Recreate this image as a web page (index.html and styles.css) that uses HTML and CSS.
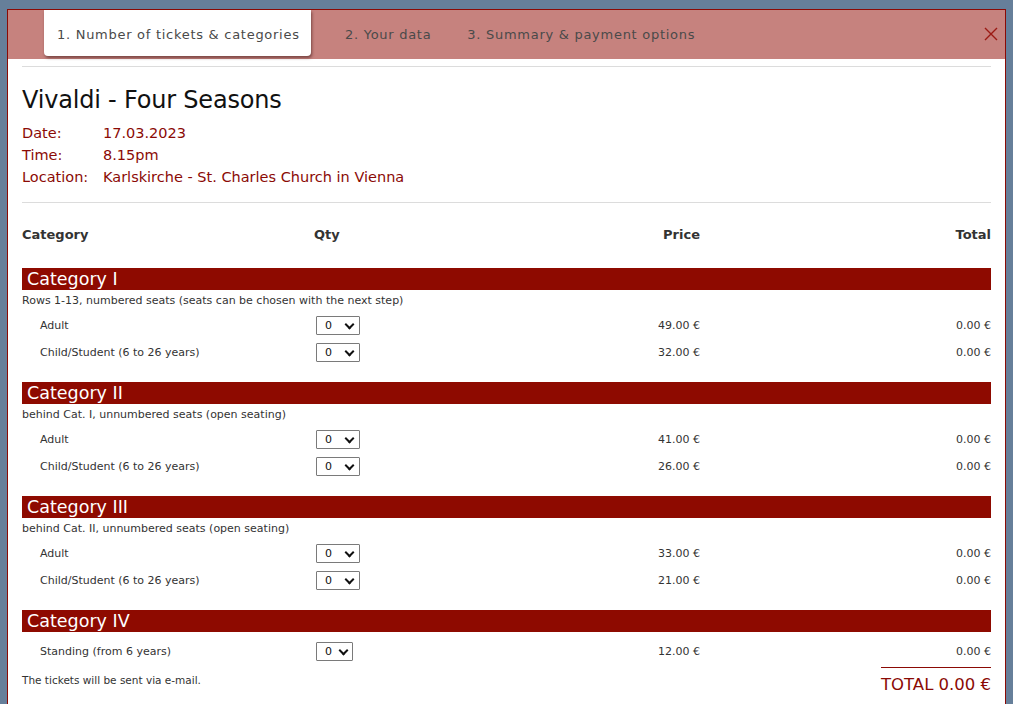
FILE: index.html
```html
<!DOCTYPE html>
<html>
<head>
<meta charset="utf-8">
<link rel="stylesheet" href="styles.css">
</head>
<body>
<div class="modal">
  <div class="tabs">
    <div class="tab active">1. Number of tickets &amp; categories</div>
    <div class="tab second">2. Your data</div>
    <div class="tab">3. Summary &amp; payment options</div>
    <div class="close">
      <svg width="14" height="14" viewBox="0 0 14 14"><path d="M1 1 L13 13 M13 1 L1 13" stroke="#9b1a14" stroke-width="1.4" fill="none"/></svg>
    </div>
  </div>
  <div class="content">
    <hr class="rule first">
    <h1 class="title">Vivaldi - Four Seasons</h1>
    <div class="info">
      <div class="info-row"><span class="label">Date:</span><span>17.03.2023</span></div>
      <div class="info-row"><span class="label">Time:</span><span>8.15pm</span></div>
      <div class="info-row"><span class="label">Location:</span><span>Karlskirche - St. Charles Church in Vienna</span></div>
    </div>
    <hr class="rule second">
    <div class="grid head">
      <div>Category</div><div>Qty</div><div class="r">Price</div><div class="r">Total</div>
    </div>

    <div class="cat">
      <div class="bar">Category I</div>
      <div class="desc">Rows 1-13, numbered seats (seats can be chosen with the next step)</div>
      <div class="grid row"><div class="name">Adult</div><div><span class="sel">0<i class="chev"></i></span></div><div class="r">49.00 €</div><div class="r">0.00 €</div></div>
      <div class="grid row"><div class="name">Child/Student (6 to 26 years)</div><div><span class="sel">0<i class="chev"></i></span></div><div class="r">32.00 €</div><div class="r">0.00 €</div></div>
    </div>

    <div class="cat">
      <div class="bar">Category II</div>
      <div class="desc">behind Cat. I, unnumbered seats (open seating)</div>
      <div class="grid row"><div class="name">Adult</div><div><span class="sel">0<i class="chev"></i></span></div><div class="r">41.00 €</div><div class="r">0.00 €</div></div>
      <div class="grid row"><div class="name">Child/Student (6 to 26 years)</div><div><span class="sel">0<i class="chev"></i></span></div><div class="r">26.00 €</div><div class="r">0.00 €</div></div>
    </div>

    <div class="cat">
      <div class="bar">Category III</div>
      <div class="desc">behind Cat. II, unnumbered seats (open seating)</div>
      <div class="grid row"><div class="name">Adult</div><div><span class="sel">0<i class="chev"></i></span></div><div class="r">33.00 €</div><div class="r">0.00 €</div></div>
      <div class="grid row"><div class="name">Child/Student (6 to 26 years)</div><div><span class="sel">0<i class="chev"></i></span></div><div class="r">21.00 €</div><div class="r">0.00 €</div></div>
    </div>

    <div class="cat last">
      <div class="bar">Category IV</div>
      <div class="grid row first-row"><div class="name">Standing (from 6 years)</div><div><span class="sel small">0<i class="chev"></i></span></div><div class="r">12.00 €</div><div class="r">0.00 €</div></div>
    </div>

    <div class="footer">
      <div class="note">The tickets will be sent via e-mail.</div>
      <div class="total">TOTAL 0.00 €</div>
    </div>
  </div>
</div>
</body>
</html>
```

FILE: styles.css
```css
html, body {
  margin: 0;
  padding: 0;
  background: #667f9a;
  height: 704px;
  overflow: hidden;
}
body {
  font-family: "DejaVu Sans", Verdana, sans-serif;
  color: #222;
}
.modal {
  margin: 9px 0 0 7px;
  width: 997px;
  border: 1px solid #8b0a05;
  background: #fff;
  height: 720px;
}
.tabs {
  background: #c6827e;
  height: 49px;
  display: flex;
  align-items: flex-start;
  padding-left: 36px;
  position: relative;
}
.tab {
  font-size: 13px;
  letter-spacing: 0.72px;
  color: #4a4a4a;
  padding: 0 13px;
  height: 46px;
  line-height: 50px;
  margin-right: 8px;
}
.tab.second { margin-right: 10px; }
.tab.active {
  background: #fff;
  border-radius: 0 0 4px 4px;
  box-shadow: 1px 2px 3px rgba(60, 20, 20, 0.55);
  width: 241px;
  white-space: nowrap;
  margin-right: 21px;
}
.close {
  position: absolute;
  right: 7px;
  top: 17px;
  width: 14px;
  height: 14px;
}
.close svg { display: block; }
.content {
  padding: 0 14px;
}
.rule {
  border: 0;
  border-top: 1px solid #dcdcdc;
  margin: 0;
}
.rule.first { margin-top: 7px; }
.title {
  font-weight: normal;
  font-size: 24px;
  color: #111;
  margin: 17px 0 0;
  line-height: 32px;
  letter-spacing: -0.2px;
}
.info {
  margin-top: 7px;
  color: #8b0a05;
  font-size: 14.5px;
}
.info-row {
  display: flex;
  height: 22px;
  line-height: 21px;
}
.label { width: 81px; }
.rule.second { margin-top: 13px; }
.grid {
  display: grid;
  grid-template-columns: 292px 200px 186px 291px;
  align-items: center;
}
.r { text-align: right; }
.head {
  font-weight: bold;
  font-size: 13px;
  color: #333;
  height: 64px;
  line-height: 64px;
}
.cat { margin-top: 1px; }
.cat + .cat { margin-top: 16px; }
.bar {
  background: #8e0a00;
  color: #fff;
  font-size: 17.5px;
  height: 22px;
  line-height: 22px;
  padding-left: 5px;
}
.desc {
  font-size: 11px;
  color: #333;
  height: 22px;
  line-height: 21px;
}
.row {
  font-size: 11px;
  color: #333;
  height: 27px;
}
.row.first-row { margin-top: 6px; }
.name { padding-left: 18px; }
.sel {
  display: inline-flex;
  align-items: center;
  box-sizing: border-box;
  width: 44px;
  height: 19px;
  border: 1px solid #7a7a7a;
  border-radius: 1px;
  padding-left: 8px;
  font-size: 11px;
  color: #111;
  margin-left: 2px;
  position: relative;
}
.sel.small { width: 37px; }
.chev {
  position: absolute;
  right: 6px;
  top: 4px;
  width: 5px;
  height: 5px;
  border-right: 2px solid #111;
  border-bottom: 2px solid #111;
  transform: rotate(45deg);
}
.sel.small .chev { right: 5px; }
.footer {
  display: flex;
  justify-content: space-between;
  align-items: flex-start;
  margin-top: 2px;
}
.note {
  font-size: 10.5px;
  color: #333;
  margin-top: 7px;
}
.total {
  width: 110px;
  border-top: 1px solid #8b0a05;
  color: #8b0a05;
  font-size: 16.5px;
  text-align: right;
  padding-top: 7px;
  white-space: nowrap;
}
```
